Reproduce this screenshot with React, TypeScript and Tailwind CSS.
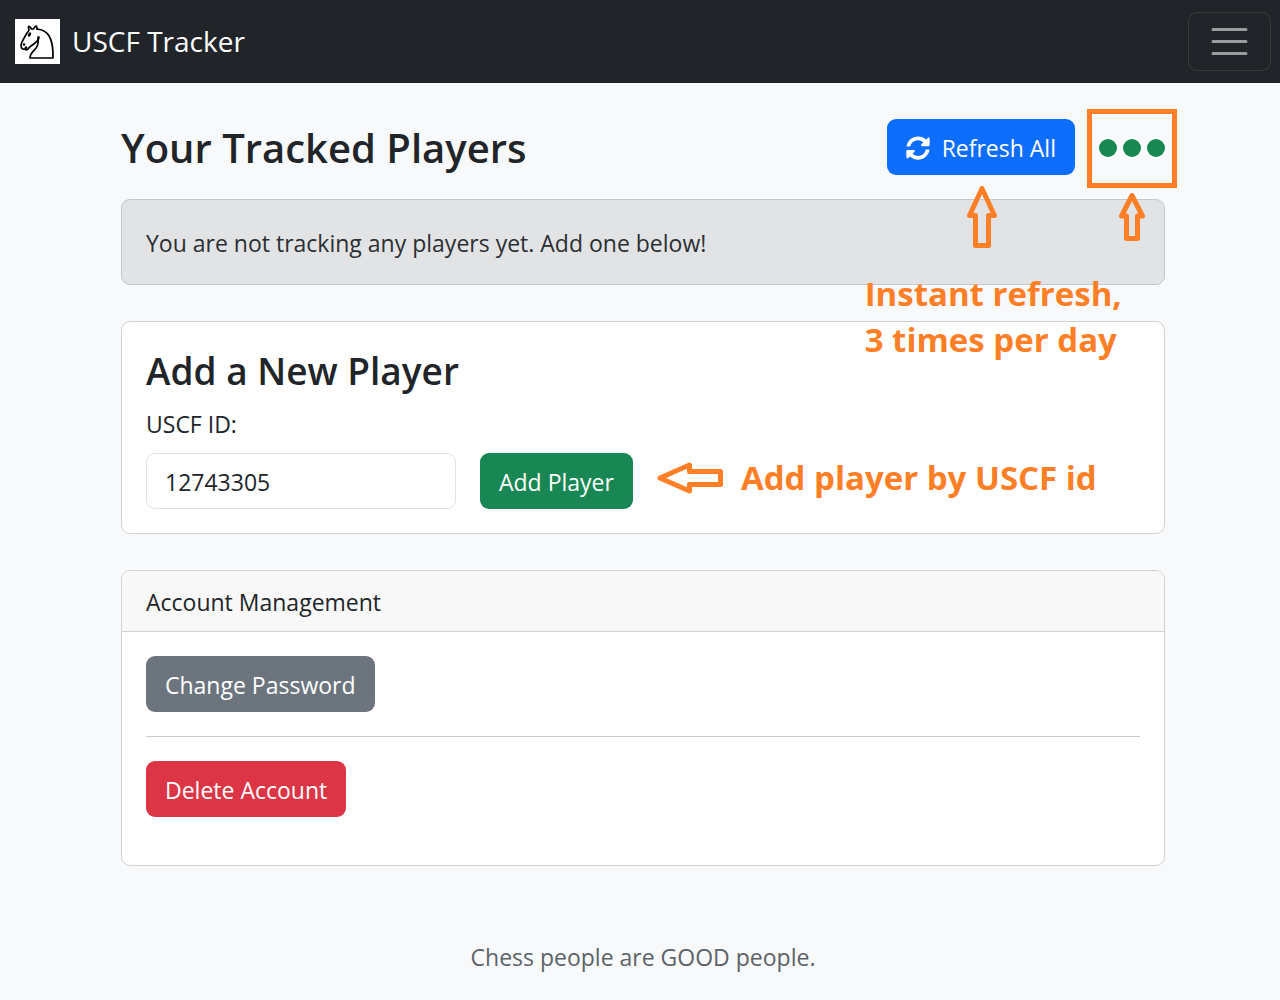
import { useState } from "react";
import type { ReactNode } from "react";
import { FaSyncAlt } from "react-icons/fa";

const variants = {
  primary: "bg-[#0d6efd]",
  success: "bg-[#198754]",
  secondary: "bg-[#6c757d]",
  danger: "bg-[#dc3545]",
};

interface ButtonProps {
  variant: keyof typeof variants;
  type?: "button" | "submit";
  children: ReactNode;
}

function Button({ variant, type = "button", children }: ButtonProps) {
  return (
    <button
      type={type}
      className={`flex h-14 shrink-0 items-center gap-3 rounded-[9px] px-[19px] pt-0.5 whitespace-nowrap text-white ${variants[variant]}`}
    >
      {children}
    </button>
  );
}

function KnightLogo() {
  return (
    <svg viewBox="0 0 45 45" className="size-[45px] bg-white" aria-hidden="true">
      <g fill="none" stroke="#000" strokeWidth="1.7" strokeLinecap="round" strokeLinejoin="round">
        <path d="M22 10C32.5 11 38.5 18 38 39H15C15 30 25 32.5 23 18" />
        <path d="M24 18C24.38 20.91 18.45 25.37 16 27C13 29 13.18 31.34 11 31C9.96 30.06 12.41 27.96 11 28C10 28 11.19 29.23 10 30C9 30 6 31 6 26C6 24 12 14 12 14C12 14 13.89 12.1 14 10.5C13.27 9.51 13.5 8.5 13.5 7.5C14.5 6.5 16.5 10 16.5 10H18.5C18.5 10 19.28 8.01 21 7C22 7 22 10 22 10" />
        <circle cx="9" cy="25.5" r="0.5" fill="#000" />
        <ellipse cx="14.5" cy="15.5" rx="0.5" ry="1.5" transform="rotate(30 14.5 15.5)" fill="#000" />
      </g>
    </svg>
  );
}

function Navbar() {
  return (
    <nav className="flex items-center justify-between bg-[#212529] py-3 pr-[9px] pl-[15px]">
      <a href="#" className="flex items-center gap-3 text-[28px] leading-[45px] text-white">
        <KnightLogo />
        USCF Tracker
      </a>
      <button
        type="button"
        aria-label="Toggle navigation"
        className="flex h-[59px] w-[83px] items-center justify-center rounded-[9px] border border-white/10"
      >
        <svg viewBox="0 0 30 30" className="size-[45px]" aria-hidden="true">
          <path
            d="M4 7h22M4 15h22M4 23h22"
            stroke="#fff"
            strokeOpacity="0.55"
            strokeWidth="2"
            strokeLinecap="round"
            strokeMiterlimit="10"
          />
        </svg>
      </button>
    </nav>
  );
}

function TrackedPlayers() {
  return (
    <section>
      <div className="mb-6 flex items-center justify-between">
        <h1 className="pt-0.5 text-[40px] leading-[50px] font-semibold">Your Tracked Players</h1>
        <div className="flex items-center gap-6">
          <div className="relative">
            <Button variant="primary">
              <FaSyncAlt className="size-6" aria-hidden="true" />
              Refresh All
            </Button>
            <svg
              viewBox="0 0 30 62"
              className="absolute top-[67px] left-20 h-[62px] w-[30px]"
              aria-hidden="true"
            >
              <path
                d="M15 2.500L27.500 29.500H21.500V59.500H8.500V29.500H2.500Z"
                fill="none"
                stroke="#ff7f27"
                strokeWidth="5"
                strokeLinejoin="round"
              />
            </svg>
            <p className="absolute top-[152px] -left-[22px] text-[33px] leading-[46px] font-bold whitespace-nowrap text-[#ff7f27]">
              Instant refresh,
              <br />3 times per day
            </p>
          </div>
          <div className="relative pt-0.5">
            <div className="flex gap-[6px]">
              <span className="size-[18px] rounded-full bg-[#198754]" />
              <span className="size-[18px] rounded-full bg-[#198754]" />
              <span className="size-[18px] rounded-full bg-[#198754]" />
            </div>
            <div className="absolute -inset-x-3 -top-7 -bottom-[31px] border-[5px] border-[#ff7f27]" />
            <svg
              viewBox="0 0 26 49"
              className="absolute top-14 left-5 h-[49px] w-[26px]"
              aria-hidden="true"
            >
              <path
                d="M13 2.500L23.500 23H18.500V45.500H7.500V23H2.500Z"
                fill="none"
                stroke="#ff7f27"
                strokeWidth="5"
                strokeLinejoin="round"
              />
            </svg>
          </div>
        </div>
      </div>
      <div className="rounded-[9px] border border-[#c4c8cb] bg-[#e2e3e5] px-6 pt-[25px] pb-[23px] text-[#2b2f32]">
        You are not tracking any players yet. Add one below!
      </div>
    </section>
  );
}

function AddPlayerCard() {
  const [uscfId, setUscfId] = useState("12743305");

  return (
    <section className="rounded-[9px] border border-[#d0d2d4] bg-white px-6 pt-[25px] pb-6">
      <h2 className="mb-3 text-[37px] leading-[47px] font-semibold">Add a New Player</h2>
      <form onSubmit={(e) => e.preventDefault()}>
        <label htmlFor="uscf-id" className="mb-[11px] block">
          USCF ID:
        </label>
        <div className="flex items-start gap-6">
          <input
            id="uscf-id"
            type="text"
            value={uscfId}
            onChange={(e) => setUscfId(e.target.value)}
            className="h-14 w-[310px] rounded-[9px] border border-[#dee2e6] bg-white px-[18px] pt-0.5"
          />
          <Button variant="success" type="submit">
            Add Player
          </Button>
          <div className="flex h-[50px] items-center gap-[18px] text-[33px] leading-[46px] font-bold whitespace-nowrap text-[#ff7f27]">
            <svg viewBox="0 0 66 32" className="h-8 w-[66px]" aria-hidden="true">
              <path
                d="M3 16L32.500 3V9.500H63.500V22.500H32.500V29Z"
                fill="none"
                stroke="#ff7f27"
                strokeWidth="5"
                strokeLinejoin="round"
              />
            </svg>
            Add player by USCF id
          </div>
        </div>
      </form>
    </section>
  );
}

function AccountCard() {
  return (
    <section className="overflow-hidden rounded-[9px] border border-[#d0d2d4] bg-white">
      <h2 className="border-b border-[#d0d2d4] bg-[#f8f8f8] px-6 pt-[13px] pb-[11px]">Account Management</h2>
      <div className="px-6 pt-6 pb-12">
        <Button variant="secondary">Change Password</Button>
        <hr className="my-6 border-[#c8c9ca]" />
        <Button variant="danger">Delete Account</Button>
      </div>
    </section>
  );
}

export default function App() {
  return (
    <div className="min-h-screen bg-[#f8f9fa] font-['Open_Sans','Noto_Sans',sans-serif] text-[23px] leading-9 text-[#212529]">
      <Navbar />
      <main className="flex flex-col gap-9 pt-9 pr-[115px] pl-[121px]">
        <TrackedPlayers />
        <AddPlayerCard />
        <AccountCard />
      </main>
      <footer className="pt-[73px] pr-[115px] pb-6 pl-[121px] text-center text-[#5c6369]">
        Chess people are GOOD people.
      </footer>
    </div>
  );
}
